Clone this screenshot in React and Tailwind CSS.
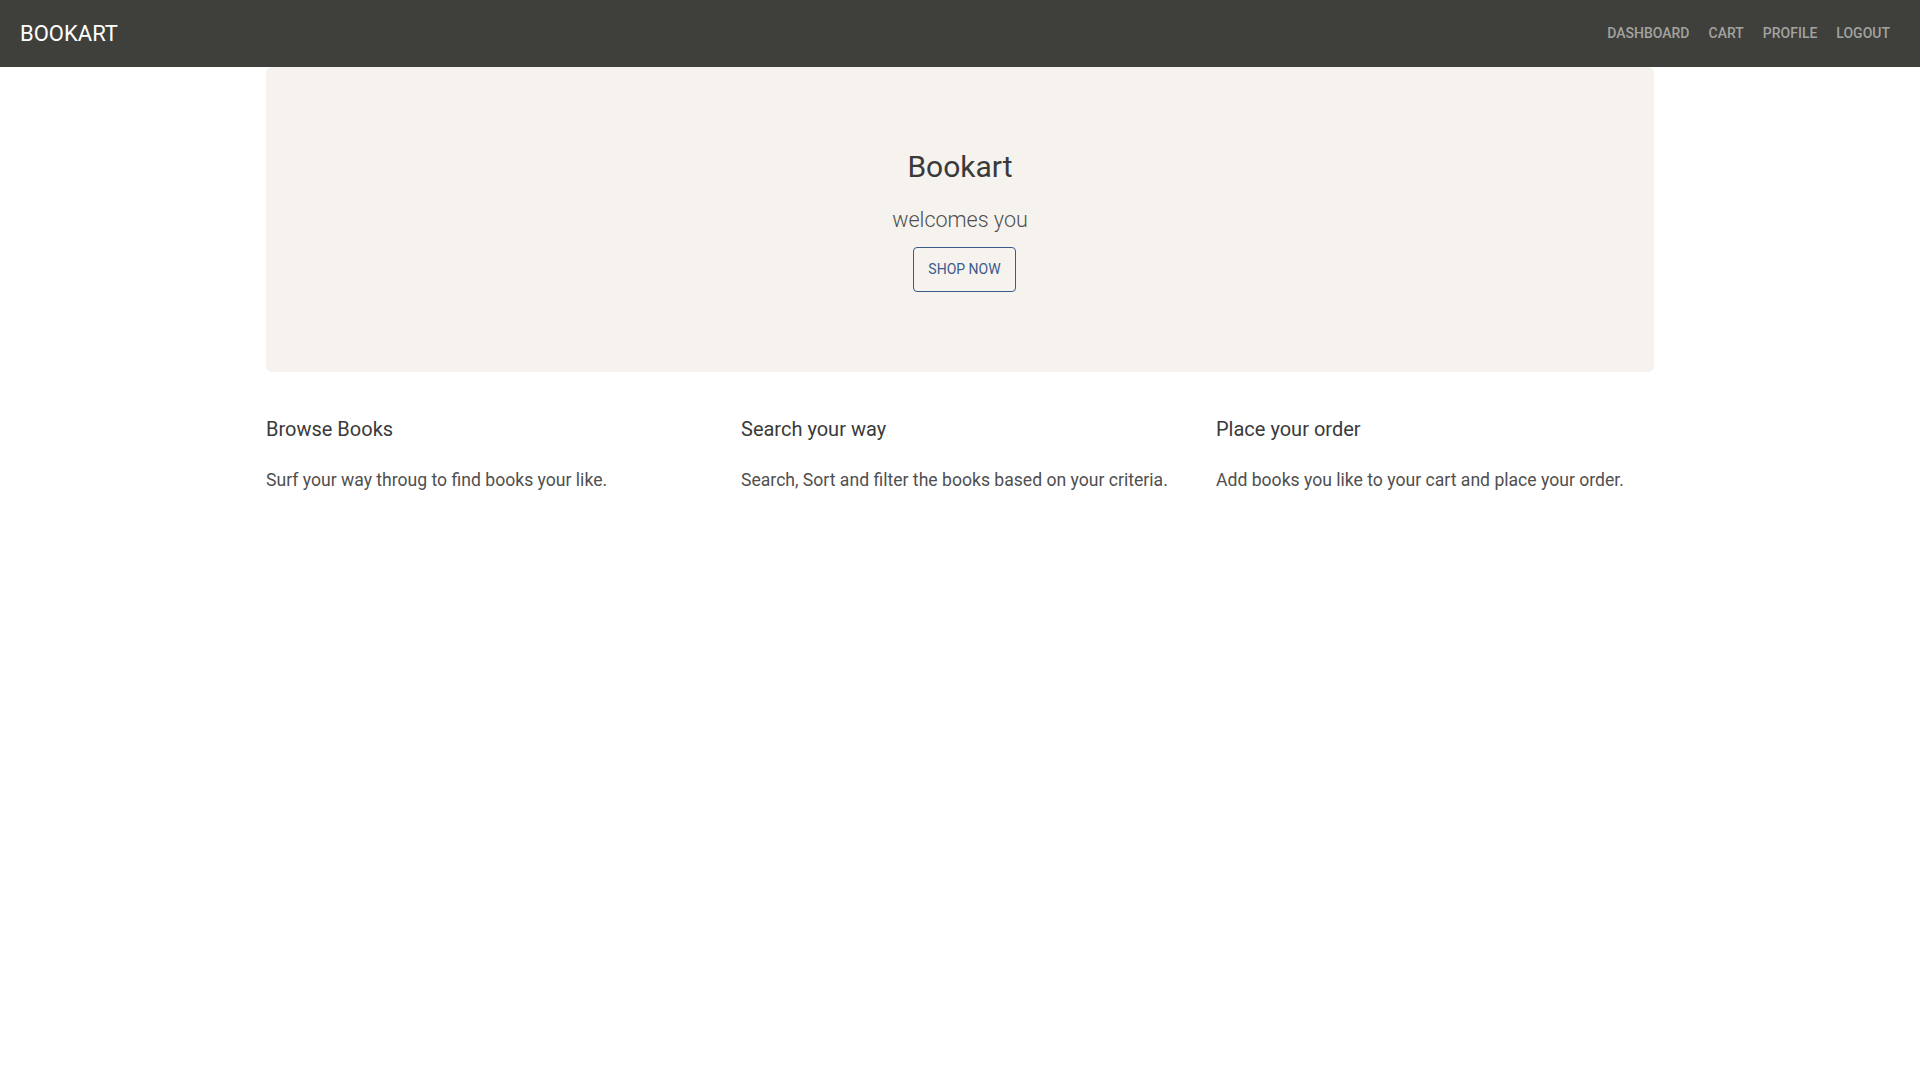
import React from 'react';

const features = [
    { title: 'Browse Books', text: 'Surf your way throug to find books your like.' },
    { title: 'Search your way', text: 'Search, Sort and filter the books based on your criteria.' },
    { title: 'Place your order', text: 'Add books you like to your cart and place your order.' },
];

const links = ['Dashboard', 'Cart', 'Profile', 'Logout'];

const App = () => {
    return (
        <div className="min-h-screen bg-white font-['Roboto',sans-serif] text-[#4f4f4f]">
            {/* Navbar */}
            <nav className="h-[67px] bg-[#3f3f3b] flex items-center justify-between pl-[20px] pr-[30px]">
                <a href="#" className="text-white text-[22px] leading-none">BOOKART</a>
                <ul className="flex items-center gap-[19px] -mt-[2px]">
                    {links.map((l) => (
                        <li key={l}>
                            <a href="#" className="uppercase text-[14px] font-medium text-[#a3a3a0] leading-none">{l}</a>
                        </li>
                    ))}
                </ul>
            </nav>

            <main className="w-[1388px] mx-auto">
                {/* Hero */}
                <section className="bg-[#f6f3ee] rounded-md pt-[81px] pb-[80px] flex flex-col items-center">
                    <h1 className="text-[30px] leading-[38px] text-[#3a3a3a] mb-[15px]">Bookart</h1>
                    <p className="text-[21.5px] leading-[36px] font-light text-[#4f4f4f] mb-[10px] mt-[1px]">welcomes you</p>
                    <button className="h-[45px] w-[103px] ml-[9px] -mt-[1px] border border-[#3b5a8c] rounded-[4px] text-[#3b5a8c] text-[14px] font-normal uppercase">
                        Shop Now
                    </button>
                </section>

                {/* Features */}
                <section className="grid grid-cols-3 gap-x-[37px] pt-[45px]">
                    {features.map((f) => (
                        <div key={f.title}>
                            <h4 className="text-[20px] leading-[24px] text-[#3a3a3a] mb-[26px]">{f.title}</h4>
                            <p className="text-[17.6px] leading-[27px]">{f.text}</p>
                        </div>
                    ))}
                </section>
            </main>
        </div>
    );
};

export default App;
